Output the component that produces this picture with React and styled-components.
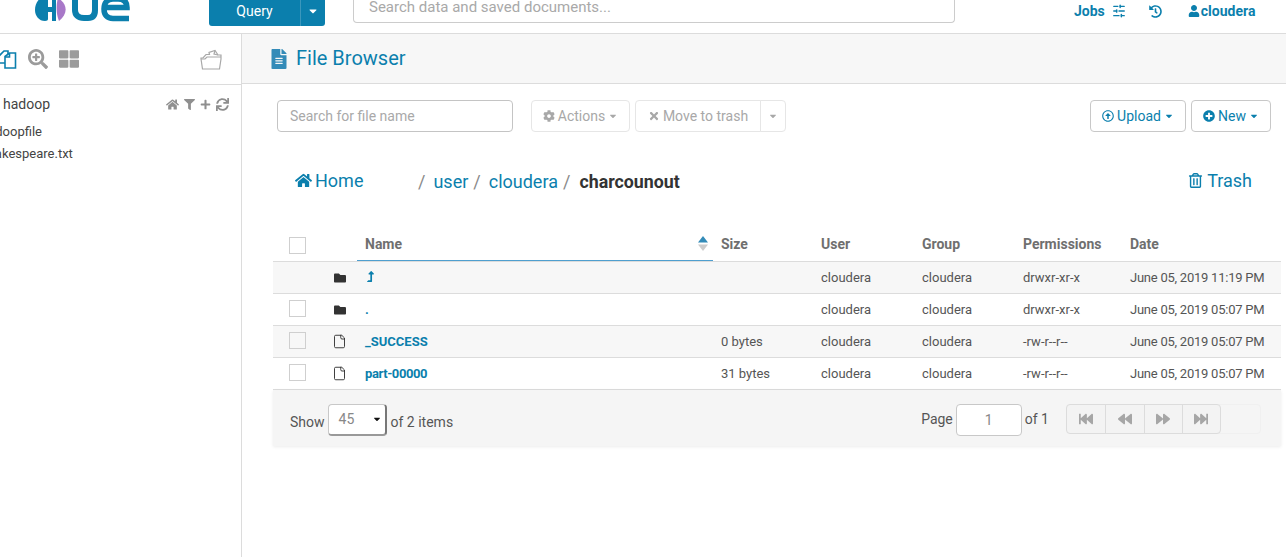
import React from 'react';
import styled, { createGlobalStyle } from 'styled-components';
import {
  FaHome, FaFilter, FaPlus, FaSync, FaCog, FaTimes, FaRegTrashAlt, FaPlusCircle, FaFolder,
  FaFileAlt, FaFastBackward, FaBackward, FaForward, FaFastForward, FaUser, FaHistory, FaSearchPlus,
  FaThLarge, FaLevelUpAlt, FaRegArrowAltCircleUp, FaCaretDown,
} from 'react-icons/fa';
import { LuSlidersHorizontal, LuFile } from 'react-icons/lu';

const BLUE = '#0b7fad';

const GlobalStyle = createGlobalStyle`
  html, body {
    margin: 0;
    height: 100%;
    overflow: hidden;
    background: #fff;
    font-family: Roboto, "Liberation Sans", sans-serif;
    font-size: 14px;
    color: #444;
  }
`;

const Page = styled.div`
  width: 1286px;
  height: 557px;
  display: flex;
  flex-direction: column;
  overflow: hidden;
`;

const TopBar = styled.header`
  height: 33px;
  flex: none;
  border-bottom: 1px solid #dcdcdc;
  display: flex;
  align-items: flex-start;
  padding-left: 35px;
`;

const Logo = styled.svg`
  width: 96px;
  height: 22px;
  flex: none;
`;

const QueryGroup = styled.div`
  margin-left: 78px;
  display: flex;
  height: 26px;
  background: ${BLUE};
  border-radius: 0 0 3px 3px;
  color: #fff;
`;

const QueryLabel = styled.div`
  width: 92px;
  box-sizing: border-box;
  padding-bottom: 5px;
  display: flex;
  align-items: center;
  justify-content: center;
  border-right: 1px solid #3b97bc;
  font-size: 14px;
`;

const QueryCaret = styled.div`
  width: 24px;
  padding-bottom: 5px;
  display: flex;
  align-items: center;
  justify-content: center;
  font-size: 12px;
`;

const TopSearch = styled.div`
  margin-left: 28px;
  width: 585px;
  height: 22px;
  padding-left: 15px;
  border: 1px solid #ccc;
  border-top: 0;
  border-radius: 0 0 4px 4px;
  color: #a9a9a9;
  font-size: 15px;
  line-height: 14px;
`;

const TopLinks = styled.nav`
  margin-left: 119px;
  display: flex;
  align-items: center;
  height: 22px;
  color: ${BLUE};
  font-weight: 700;
  font-size: 14px;
`;

const JobsIcon = styled(LuSlidersHorizontal)`
  margin-left: 7px;
  font-size: 14px;
  stroke-width: 2.4;
`;

const HistoryIcon = styled(FaHistory)`
  margin-left: 23px;
  font-size: 13px;
`;

const UserLink = styled.span`
  margin-left: 26px;
  display: flex;
  align-items: center;
  gap: 1px;
  svg { font-size: 12px; }
`;

const Body = styled.div`
  flex: 1;
  display: flex;
  min-height: 0;
`;

const Sidebar = styled.aside`
  width: 241px;
  flex: none;
  border-right: 1px solid #dcdcdc;
  overflow: hidden;
`;

const SideIcons = styled.div`
  height: 51px;
  box-sizing: border-box;
  border-bottom: 1px solid #dcdcdc;
  display: flex;
  align-items: center;
  padding: 0 19px 0 0;
  color: #9b9b9b;
  font-size: 20px;
`;

const CopyIcon = styled.svg`
  width: 19px;
  height: 19px;
  margin-left: -2px;
  flex: none;
`;

const ZoomIcon = styled(FaSearchPlus)`
  margin-left: 11px;
`;

const GridIcon = styled(FaThLarge)`
  margin-left: 11px;
`;

const FolderOpen = styled.svg`
  width: 23px;
  height: 21px;
  margin-left: auto;
  flex: none;
`;

const SideHead = styled.div`
  height: 34px;
  padding: 4px 12px 0 3px;
  box-sizing: border-box;
  display: flex;
  align-items: center;
  font-size: 14px;
  color: #444;
`;

const SideTools = styled.div`
  margin-left: auto;
  display: flex;
  align-items: center;
  gap: 5px;
  color: #8f8f8f;
  font-size: 13px;
`;

const SideFile = styled.div`
  height: 22px;
  margin-left: -19px;
  line-height: 22px;
  font-size: 13px;
  color: #444;
`;

const SideFiles = styled.div`
  padding-top: 2px;
`;

const Main = styled.main`
  flex: 1;
  min-width: 0;
`;

const TitleBar = styled.div`
  height: 49px;
  box-sizing: content-box;
  background: #f7f7f7;
  border-bottom: 1px solid #dcdcdc;
  display: flex;
  align-items: center;
  padding-left: 27px;
  color: ${BLUE};
  font-size: 20px;
  line-height: 47px;
  svg { font-size: 20px; margin-right: 7px; color: #338bb8; }
`;

const Toolbar = styled.div`
  margin-top: 16px;
  padding: 0 15px 0 35px;
  display: flex;
  align-items: center;
`;

const FileSearch = styled.div`
  width: 236px;
  height: 32px;
  box-sizing: border-box;
  border: 1px solid #c4c4c4;
  border-radius: 4px;
  padding-left: 12px;
  line-height: 30px;
  color: #a9a9a9;
  font-size: 14px;
`;

const ToolButton = styled.div`
  height: 32px;
  box-sizing: border-box;
  border: 1px solid ${p => (p.$disabled ? '#e6e6e6' : '#c8c8c8')};
  border-radius: ${p => p.$radius || '4px'};
  display: flex;
  align-items: center;
  justify-content: center;
  gap: 3px;
  width: ${p => p.$w}px;
  margin-left: ${p => p.$ml || 0}px;
  color: ${p => (p.$disabled ? '#a8a8a8' : BLUE)};
  font-size: 14px;
  svg { font-size: 12px; }
`;

const Crumbs = styled.div`
  margin-top: 33px;
  height: 32px;
  padding: 0 34px 0 53px;
  display: flex;
  align-items: center;
  font-size: 18px;
  color: ${BLUE};
`;

const HomeLink = styled.span`
  display: flex;
  align-items: center;
  width: 123px;
  gap: 3px;
  margin-top: -1px;
  svg { font-size: 17px; }
`;

const Sep = styled.span`
  color: #8a8a8a;
  margin: 0 8px 0 ${p => p.$ml || 0}px;
`;

const Current = styled.span`
  font-weight: 700;
  font-size: 17.8px;
  color: #333;
  margin-left: 1px;
`;

const TrashLink = styled.span`
  margin-left: auto;
  display: flex;
  align-items: center;
  gap: 4px;
  margin-top: -1px;
  svg { font-size: 15px; }
`;

const Table = styled.div`
  margin: 31px 5px 0 31px;
`;

const Row = styled.div`
  display: grid;
  grid-template-columns: 54px 30px 356px 100px 101px 101px 107px 159px;
  height: ${p => (p.$head ? 34 : 32)}px;
  box-sizing: border-box;
  border-bottom: 1px solid #dcdcdc;
  background: ${p => (p.$odd ? '#f7f7f7' : 'transparent')};
  font-size: 13px;
  color: #555;
`;

const Cell = styled.div`
  display: flex;
  align-items: center;
  padding-left: 8px;
  white-space: nowrap;
`;

const DateCell = styled(Cell)`
  letter-spacing: -0.24px;
`;

const HeadCell = styled(Cell)`
  font-size: 14px;
  font-weight: 700;
  color: #6f6f6f;
  padding-bottom: 1px;
`;

const SortedCell = styled(HeadCell)`
  border-bottom: 1px solid #4f9fcf;
  justify-content: space-between;
  padding-right: 5px;
  padding-bottom: 0;
`;

const SortIcon = styled.svg`
  width: 10px;
  height: 15px;
  margin-top: -1px;
`;

const CheckCell = styled.div`
  display: flex;
  align-items: center;
  padding-left: 16px;
  padding-top: ${p => (p.$head ? 1 : 0)}px;
  padding-bottom: ${p => (p.$head ? 0 : 3)}px;
`;

const Check = styled.span`
  width: 15px;
  height: 15px;
  border: 1px solid #cfcfcf;
  background: ${p => (p.$head ? '#fff' : 'transparent')};
  display: block;
`;

const IconCell = styled.div`
  display: flex;
  align-items: center;
  color: #333;
  font-size: 12px;
  padding-left: 7px;
`;

const PlainFileIcon = styled(LuFile)`
  font-size: 15px;
  margin-left: -2px;
  stroke-width: 1.5;
`;

const NameLink = styled.span`
  color: ${BLUE};
  font-weight: 700;
  letter-spacing: ${p => (p.$digits ? '-0.4px' : '0')};
`;

const Footer = styled.div`
  height: 56px;
  box-sizing: border-box;
  background: #f5f5f5;
  box-shadow: 0 1px 3px rgba(0, 0, 0, 0.08);
  display: flex;
  align-items: center;
  padding: 4px 20px 0 17px;
  font-size: 14px;
  color: #555;
`;

const LowLabel = styled.span`
  padding-top: 3px;
`;

const HighLabel = styled.span`
  padding-bottom: 2px;
`;

const ShowSelect = styled.div`
  width: 59px;
  height: 32px;
  box-sizing: border-box;
  margin: 0 4px 0 3px;
  background: #fff;
  border: 1px solid #c8c8c8;
  border-right: 2px solid #777;
  border-bottom: 2px solid #999;
  border-radius: 4px;
  display: flex;
  align-items: center;
  justify-content: space-between;
  padding: 0 3px 2px 10px;
  color: #888;
  svg { font-size: 10px; color: #111; }
`;

const Pager = styled.div`
  margin-left: auto;
  display: flex;
  align-items: center;
`;

const PageInput = styled.div`
  width: 66px;
  height: 32px;
  box-sizing: border-box;
  margin: 0 3px;
  background: #fff;
  border: 1px solid #c8c8c8;
  border-radius: 4px;
  display: flex;
  align-items: center;
  justify-content: center;
  color: #888;
`;

const PagerRail = styled.div`
  margin-left: 17px;
  width: 195px;
  height: 30px;
  margin-bottom: 2px;
  border: 1px solid #f0f0f0;
  border-radius: 4px;
  box-sizing: border-box;
`;

const PagerGroup = styled.div`
  width: 155px;
  height: 30px;
  box-sizing: border-box;
  margin: -1px 0 0 -1px;
  border: 1px solid #dcdcdc;
  border-radius: 4px;
  display: grid;
  grid-template-columns: repeat(4, 1fr);
  background: #f3f3f3;
`;

const PagerButton = styled.div`
  display: flex;
  align-items: center;
  justify-content: center;
  color: #a6a6a6;
  font-size: 14px;
  & + & { border-left: 1px solid #dcdcdc; }
`;

const rows = [
  { odd: true, folder: true, noCheck: true, name: <FaLevelUpAlt size={11} />, size: '', perm: 'drwxr-xr-x', date: 'June 05, 2019 11:19 PM' },
  { folder: true, name: '.', size: '', perm: 'drwxr-xr-x', date: 'June 05, 2019 05:07 PM' },
  { odd: true, name: '_SUCCESS', size: '0 bytes', perm: '-rw-r--r--', date: 'June 05, 2019 05:07 PM' },
  { name: 'part-00000', digits: true, size: '31 bytes', perm: '-rw-r--r--', date: 'June 05, 2019 05:07 PM' },
];

export default function App() {
  return (
    <Page>
      <GlobalStyle />
      <TopBar>
        {/* the logo is cut off by the scrolled page */}
        <Logo viewBox="35 0 96 22">
          <path d="M45 -4 C38 -2 35 4 35 10 C35 16 39 21 45 21 C47 21 48 20 48 19 V12 H52 V21 H56 V-4 H52 V7 H48 V-4 Z" fill={BLUE} />
          <path d="M58 -2 C68 4 68 14 59 21 C56 14 56 4 58 -2 Z" fill="#a878c8" />
          <path d="M75 -2 V10 C75 15 78 18 84 18 H88 C93 18 95 15 95 10 V-2" fill="none" stroke={BLUE} strokeWidth="6" />
          <path d="M104 7.5 H127 C127 2 124 -1 118 -1 H113 C107 -1 104 3 104 9 C104 15 107 18.5 113 18.5 H129" fill="none" stroke={BLUE} strokeWidth="5.5" />
        </Logo>
        <QueryGroup>
          <QueryLabel>Query</QueryLabel>
          <QueryCaret><FaCaretDown /></QueryCaret>
        </QueryGroup>
        <TopSearch>Search data and saved documents...</TopSearch>
        <TopLinks>
          Jobs
          <JobsIcon />
          <HistoryIcon />
          <UserLink><FaUser />cloudera</UserLink>
        </TopLinks>
      </TopBar>
      <Body>
        <Sidebar>
          <SideIcons>
            <CopyIcon viewBox="0 0 19 19" fill="none" stroke={BLUE} strokeWidth="1.6">
              <path d="M1 6 L6 1 H10 V13 H1 Z" />
              <path d="M7 6.5 L11.5 3 H17.5 V18 H7 Z" fill="#fff" />
              <path d="M11.5 3 V7 H7" />
            </CopyIcon>
            <ZoomIcon />
            <GridIcon />
            <FolderOpen viewBox="0 0 23 21" fill="none" stroke="#a8a8a8" strokeWidth="1.2">
              <path d="M2 10 L3.5 20 H20.5 L22 10 V6 H19 L16 1.5 L10 3.5 L10.5 5.5 H7 L4 9 H2 Z" />
              <path d="M2 10 H6 L8 8 H22" />
              <path d="M16 1.5 L15 5 L19 6" />
            </FolderOpen>
          </SideIcons>
          <SideHead>
            hadoop
            <SideTools>
              <FaHome />
              <FaFilter size={11} />
              <FaPlus size={11} />
              <FaSync size={13} />
            </SideTools>
          </SideHead>
          <SideFiles>
            <SideFile>hadoopfile</SideFile>
            <SideFile>shakespeare.txt</SideFile>
          </SideFiles>
        </Sidebar>
        <Main>
          <TitleBar><FaFileAlt />File Browser</TitleBar>
          <Toolbar>
            <FileSearch>Search for file name</FileSearch>
            <ToolButton $disabled $w={99} $ml={18}><FaCog />Actions<FaCaretDown size={10} /></ToolButton>
            <ToolButton $disabled $w={126} $ml={5} $radius="4px 0 0 4px"><FaTimes />Move to trash</ToolButton>
            <ToolButton $disabled $w={26} $ml={-1} $radius="0 4px 4px 0"><FaCaretDown size={10} /></ToolButton>
            <ToolButton $w={96} $ml={304}><FaRegArrowAltCircleUp />Upload<FaCaretDown size={10} /></ToolButton>
            <ToolButton $w={80} $ml={5}><FaPlusCircle />New<FaCaretDown size={10} /></ToolButton>
          </Toolbar>
          <Crumbs>
            <HomeLink><FaHome />Home</HomeLink>
            <Sep>/</Sep>user<Sep $ml={5}>/</Sep>cloudera<Sep $ml={5}>/</Sep>
            <Current>charcounout</Current>
            <TrashLink><FaRegTrashAlt />Trash</TrashLink>
          </Crumbs>
          <Table>
            <Row $head>
              <CheckCell $head><Check $head /></CheckCell>
              <span />
              <SortedCell>
                Name
                <SortIcon viewBox="0 0 10 15">
                  <path d="M5 0 L10 6.5 H0 Z" fill="#338bb8" />
                  <path d="M0 8.5 H10 L5 15 Z" fill="#ccc" />
                </SortIcon>
              </SortedCell>
              <HeadCell>Size</HeadCell>
              <HeadCell>User</HeadCell>
              <HeadCell>Group</HeadCell>
              <HeadCell>Permissions</HeadCell>
              <HeadCell>Date</HeadCell>
            </Row>
            {rows.map((r, i) => (
              <Row key={i} $odd={r.odd}>
                <CheckCell>{!r.noCheck && <Check />}</CheckCell>
                <IconCell>{r.folder ? <FaFolder /> : <PlainFileIcon />}</IconCell>
                <Cell><NameLink $digits={r.digits}>{r.name}</NameLink></Cell>
                <Cell>{r.size}</Cell>
                <Cell>cloudera</Cell>
                <Cell>cloudera</Cell>
                <Cell>{r.perm}</Cell>
                <DateCell>{r.date}</DateCell>
              </Row>
            ))}
            <Footer>
              <LowLabel>Show</LowLabel>
              <ShowSelect>45<FaCaretDown /></ShowSelect>
              <LowLabel>of 2 items</LowLabel>
              <Pager>
                <HighLabel>Page</HighLabel>
                <PageInput>1</PageInput>
                <HighLabel>of 1</HighLabel>
                <PagerRail>
                  <PagerGroup>
                    <PagerButton><FaFastBackward /></PagerButton>
                    <PagerButton><FaBackward /></PagerButton>
                    <PagerButton><FaForward /></PagerButton>
                    <PagerButton><FaFastForward /></PagerButton>
                  </PagerGroup>
                </PagerRail>
              </Pager>
            </Footer>
          </Table>
        </Main>
      </Body>
    </Page>
  );
}
